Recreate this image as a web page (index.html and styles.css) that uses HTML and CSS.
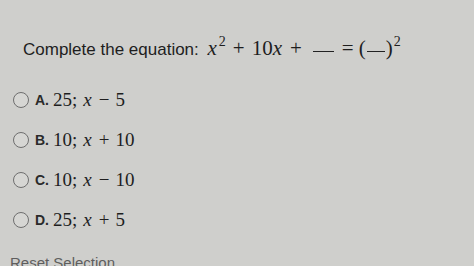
FILE: index.html
```html
<!DOCTYPE html>
<html lang="en">
<head>
    <meta charset="UTF-8">
    <title>Complete the equation</title>
    <link rel="stylesheet" href="styles.css">
</head>
<body>
    <div class="question">
        <p class="prompt">
            Complete the equation:
            <span class="math"><i>x</i><sup>2</sup><span class="bin">+</span>10<i>x</i><span class="bin">+</span><span class="blank"></span><span class="rel">=</span>(<span class="blank short"></span>)<sup>2</sup></span>
        </p>
        <ul class="choices">
            <li class="choice"><span class="radio"></span><span class="letter">A.</span><span class="math">25;<i>x</i><span class="bin">&minus;</span>5</span></li>
            <li class="choice"><span class="radio"></span><span class="letter">B.</span><span class="math">10;<i>x</i><span class="bin">+</span>10</span></li>
            <li class="choice"><span class="radio"></span><span class="letter">C.</span><span class="math">10;<i>x</i><span class="bin">&minus;</span>10</span></li>
            <li class="choice"><span class="radio"></span><span class="letter">D.</span><span class="math">25;<i>x</i><span class="bin">+</span>5</span></li>
        </ul>
        <div class="reset">Reset Selection</div>
    </div>
</body>
</html>
```

FILE: styles.css
```css
body {
    margin: 0;
    background-color: #cfcfcc;
    font-family: "Liberation Sans", Arial, sans-serif;
    color: #1e1e1e;
    height: 266px;
    overflow: hidden;
}
.question {
    padding: 33px 0 0 10px;
}
.prompt {
    margin: 0 0 0 13px;
    font-size: 17px;
    line-height: 30px;
}
.math {
    font-family: "Liberation Serif", "Times New Roman", serif;
    font-size: 21px;
    margin-left: 4px;
}
.math i {
    margin-right: 1px;
}
.math sup {
    font-size: 14px;
    vertical-align: 9px;
    line-height: 0;
    margin-left: 1px;
}
.bin {
    margin: 0 7px;
}
.rel {
    margin: 0 5px 0 8px;
}
.blank {
    display: inline-block;
    width: 21px;
    border-bottom: 1px solid #222;
    margin-left: 4px;
    vertical-align: 3px;
}
.blank.short {
    width: 18px;
    margin: 0 1px 0 1px;
}
.choices {
    list-style: none;
    margin: 22px 0 0 3px;
    padding: 0;
    display: flex;
    flex-direction: column;
    gap: 15px;
}
.choice {
    display: flex;
    align-items: center;
    height: 25px;
}
.radio {
    width: 14px;
    height: 14px;
    border: 1.5px solid #6e6e6e;
    border-radius: 50%;
    background-color: #d6d6d3;
    margin-right: 6px;
}
.letter {
    font-size: 14px;
    font-weight: bold;
    color: #2a2a2a;
}
.choice .math {
    font-size: 19px;
    margin-left: 4px;
}
.choice .math i {
    margin-left: 6px;
}
.choice .bin {
    margin: 0 6px;
}
.reset {
    margin-top: 22px;
    font-size: 15px;
    color: #5e5e5e;
}
```
